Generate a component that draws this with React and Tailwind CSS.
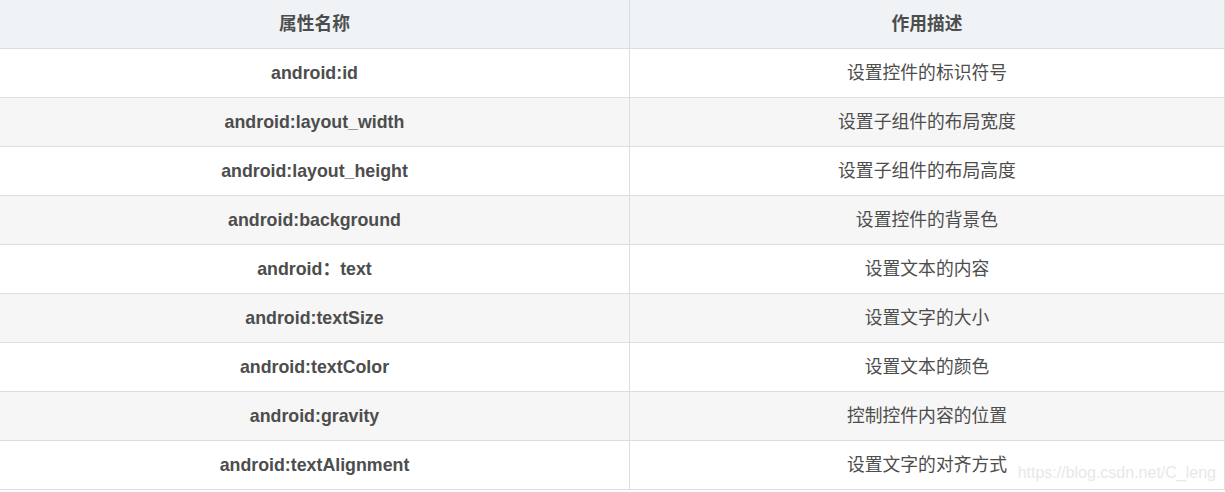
const rows = [
    ['android:id', '设置控件的标识符号'],
    ['android:layout_width', '设置子组件的布局宽度'],
    ['android:layout_height', '设置子组件的布局高度'],
    ['android:background', '设置控件的背景色'],
    ['android：text', '设置文本的内容'],
    ['android:textSize', '设置文字的大小'],
    ['android:textColor', '设置文本的颜色'],
    ['android:gravity', '控制控件内容的位置'],
    ['android:textAlignment', '设置文字的对齐方式'],
];

const font = "font-['Liberation_Sans','Noto_Sans_CJK_SC',sans-serif]";

export default function App() {
    return (
        <div className={`w-[1225px] h-[492px] bg-white text-[#4d4d4d] ${font}`}>
            <div className="relative">
                {/* Header */}
                <div className="flex h-[49px] bg-[#eff3f6] border-b border-[#dddddd]">
                    <div className="w-[630px] flex items-center justify-center border-r border-[#dddddd] text-[17.7px] font-bold">
                        属性名称
                    </div>
                    <div className="flex-1 flex items-center justify-center border-r border-[#dddddd] text-[17.7px] font-bold">
                        作用描述
                    </div>
                </div>

                {/* Body */}
                {rows.map(([attr, desc], i) => (
                    <div
                        key={i}
                        className={`flex h-[49px] border-b border-[#dddddd] ${i % 2 === 1 ? 'bg-[#f6f6f6]' : 'bg-white'}`}
                    >
                        <div className="w-[630px] flex items-center justify-center border-r border-[#dddddd] text-[17.8px] font-bold">
                            {attr}
                        </div>
                        <div className="flex-1 flex items-center justify-center border-r border-[#dddddd] text-[17.8px]">
                            {desc}
                        </div>
                    </div>
                ))}

                {/* Watermark */}
                <div className="absolute right-[9px] bottom-[5px] text-[16px] text-[#e8e8e8] font-['Liberation_Sans',sans-serif]">
                    https://blog.csdn.net/C_leng
                </div>
            </div>
        </div>
    );
}
